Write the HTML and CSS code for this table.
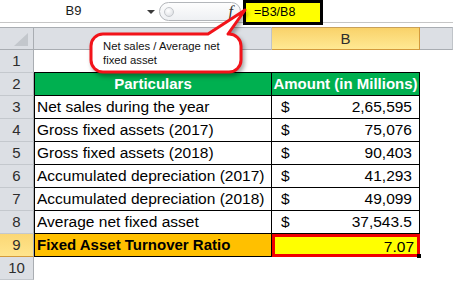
FILE: index.html
```html
<!DOCTYPE html>
<html>
<head>
<meta charset="utf-8">
<link rel="stylesheet" href="styles.css">
</head>
<body>
<div class="app">
  <div class="fbar">
    <div class="namebox"><span class="nb-text">B9</span><span class="nb-arrow"></span></div>
    <div class="pill"><span class="knob"></span><span class="fx">f</span></div>
    <div class="finput"><div class="formula">=B3/B8</div></div>
  </div>
  <div class="strip"></div>
  <div class="sheet">
    <div class="ch corner"><svg width="33" height="21" viewBox="0 0 33 21"><polygon points="14,18 28,18 28,5" fill="#c3c7cc"/></svg></div>
    <div class="ch"></div>
    <div class="ch sel">B</div>
    <div class="ch"></div>

    <div class="rh">1</div><div class="c top"></div><div class="c top"></div><div class="c"></div>

    <div class="rh">2</div>
    <div class="c t ta hd">Particulars</div>
    <div class="c t hd">Amount (in Millions)</div>
    <div class="c"></div>

    <div class="rh">3</div>
    <div class="c t ta">Net sales during the year</div>
    <div class="c t num"><span>$</span><span>2,65,595</span></div>
    <div class="c"></div>

    <div class="rh">4</div>
    <div class="c t ta">Gross fixed assets (2017)</div>
    <div class="c t num"><span>$</span><span>75,076</span></div>
    <div class="c"></div>

    <div class="rh">5</div>
    <div class="c t ta">Gross fixed assets (2018)</div>
    <div class="c t num"><span>$</span><span>90,403</span></div>
    <div class="c"></div>

    <div class="rh">6</div>
    <div class="c t ta">Accumulated depreciation (2017)</div>
    <div class="c t num"><span>$</span><span>41,293</span></div>
    <div class="c"></div>

    <div class="rh">7</div>
    <div class="c t ta">Accumulated depreciation (2018)</div>
    <div class="c t num"><span>$</span><span>49,099</span></div>
    <div class="c"></div>

    <div class="rh">8</div>
    <div class="c t ta">Average net fixed asset</div>
    <div class="c t num"><span>$</span><span>37,543.5</span></div>
    <div class="c"></div>

    <div class="rh rsel">9</div>
    <div class="c t ta res">Fixed Asset Turnover Ratio</div>
    <div class="c active">7.07</div>
    <div class="c"></div>

    <div class="rh">10</div><div class="c"></div><div class="c"></div><div class="c"></div>
  </div>

  <div class="callout">
    <svg class="callout-shape" width="453" height="90" viewBox="0 0 453 90">
      <path d="M103,34 H208 L245,10 L228,34 H229 A12,12 0 0 1 241,46 V60 A12,12 0 0 1 229,72 H103 A12,12 0 0 1 91,60 V46 A12,12 0 0 1 103,34 Z" fill="#ffffff" stroke="#f2131a" stroke-width="3" stroke-linejoin="round"/>
    </svg>
    <div class="callout-text">Net sales / Average net<br>fixed asset</div>
  </div>
</div>
</body>
</html>
```

FILE: styles.css
```css
* { box-sizing: border-box; }

body {
  margin: 0;
  width: 453px;
  height: 281px;
  overflow: hidden;
  background: #ffffff;
  font-family: "Liberation Sans", Arial, sans-serif;
  font-size: 15.5px;
  color: #000;
}

.app {
  position: relative;
  width: 453px;
  height: 281px;
}

/* formula bar */
.fbar {
  display: flex;
  height: 23px;
  border-bottom: 1px solid #c6c6c6;
  background: #fff;
}

.namebox {
  width: 157px;
  display: flex;
  align-items: center;
  padding-right: 2px;
}

.nb-text {
  flex: 1;
  text-align: center;
  line-height: 22px;
  font-size: 13px;
  color: #1a1a1a;
}

.nb-arrow {
  width: 0;
  height: 0;
  border-left: 4px solid transparent;
  border-right: 4px solid transparent;
  border-top: 4px solid #3a3a3a;
  margin-top: 2px;
}

.pill {
  margin: 2px 0 1px 2px;
  width: 82px;
  border: 1px solid #b3b6ba;
  border-radius: 10px;
  display: flex;
  align-items: center;
  justify-content: space-between;
  padding: 0 7px 0 4px;
  background: linear-gradient(#fdfdfd, #eef0f3);
}

.knob {
  width: 10px;
  height: 10px;
  border-radius: 50%;
  border: 1px solid #c4c7cb;
  background: radial-gradient(circle at 40% 35%, #ffffff, #d8dbe0);
}

.fx {
  font-family: "Liberation Serif", serif;
  font-style: italic;
  font-size: 16px;
  color: #333;
}

.finput {
  flex: 1;
  margin-left: 2px;
}

.formula {
  width: 80px;
  height: 25px;
  background: #ffff00;
  border: 3px solid #000;
  font-size: 12.5px;
  line-height: 19px;
  padding-left: 8px;
  position: relative;
}

.strip {
  height: 4px;
  background: #fff;
}

/* grid */
.sheet {
  display: grid;
  grid-template-columns: 34px 238px 148px 1fr;
  grid-template-rows: 23px repeat(10, 23px);
}

.ch {
  background: #dcdfe4;
  border-top: 1px solid #a9adb2;
  border-bottom: 1px solid #a9adb2;
  border-right: 1px solid #c0c4c9;
  text-align: center;
  line-height: 21px;
  font-size: 15px;
  color: #2d2d2d;
}

.corner {
  border-right: 1px solid #a9adb2;
}

.corner svg { display: block; }

.ch.sel {
  background: linear-gradient(#f9d26a, #ffe993);
  border-right: 1px solid #d39a3c;
  border-bottom: 1px solid #d39a3c;
  border-top: 1px solid #c9a15a;
}

.rh {
  background: #dcdfe4;
  border-right: 1px solid #a9adb2;
  border-bottom: 1px solid #c4c8cd;
  text-align: center;
  line-height: 22px;
  font-size: 15px;
  color: #2d2d2d;
}

.rh.rsel {
  background: linear-gradient(#fbd775, #ffe58d);
  border-bottom: 1px solid #d39a3c;
}

.c {
  line-height: 22px;
  white-space: nowrap;
  overflow: hidden;
}

.c.top {
  border-bottom: 1px solid #000;
}

.c.t {
  border-right: 1px solid #000;
  border-bottom: 1px solid #000;
}

.c.ta {
  border-left: 1px solid #000;
  padding-left: 2px;
}

.c.hd {
  background: #00b050;
  color: #fff;
  font-weight: 700;
  font-size: 15px;
  text-align: center;
  padding-left: 0;
}

.c.num {
  display: flex;
  justify-content: space-between;
  padding: 0 7px 0 9px;
}

.c.res {
  background: #ffc000;
  font-weight: 700;
  font-size: 15px;
}

.c.active {
  position: relative;
  overflow: visible;
  background: #ffff00;
  border: 3px solid #f00000;
  text-align: right;
  padding-right: 3px;
  line-height: 17px;
  padding-top: 1px;
}

.c.active::after {
  content: "";
  position: absolute;
  right: -4px;
  bottom: -4px;
  width: 4px;
  height: 4px;
  background: #000;
}

/* callout overlay */
.callout {
  position: absolute;
  left: 0;
  top: 0;
  width: 453px;
  height: 90px;
  pointer-events: none;
}

.callout-shape {
  position: absolute;
  left: 0;
  top: 0;
  filter: drop-shadow(2px 3px 2px rgba(0, 0, 0, 0.35));
}

.callout-text {
  position: absolute;
  left: 103px;
  top: 39px;
  font-size: 11.3px;
  line-height: 14px;
  color: #111;
}
```
